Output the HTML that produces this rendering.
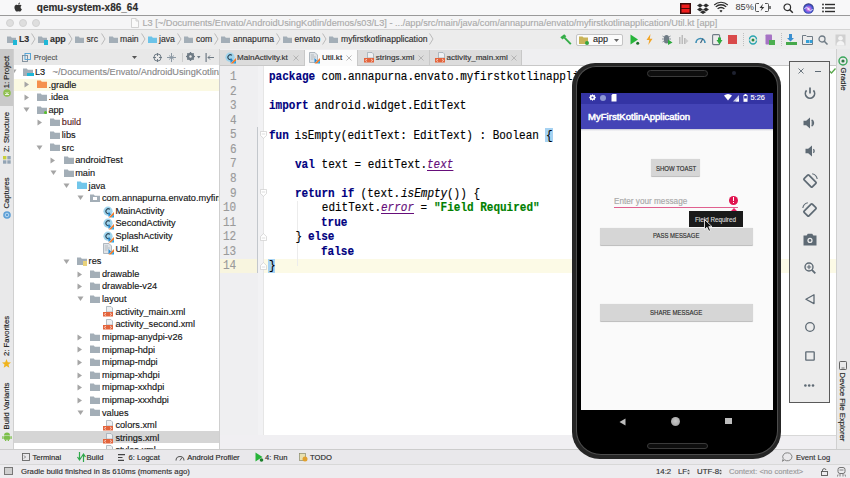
<!DOCTYPE html>
<html><head><meta charset="utf-8">
<style>
*{margin:0;padding:0;box-sizing:border-box}
html,body{width:850px;height:478px;overflow:hidden;background:#ececec;font-family:"Liberation Sans",sans-serif;position:relative}
.a{position:absolute}
.t{position:absolute;white-space:pre;line-height:1;-webkit-text-stroke:0.15px currentColor}
svg{overflow:visible}
</style></head><body>

<div class="a" style="left:0px;top:0px;width:850px;height:15px;background:#f8f8f9;"></div>
<div class="a" style="left:0px;top:15px;width:850px;height:1px;background:#9a9a9a;"></div>
<div class="a" style="left:0px;top:16px;width:850px;height:13px;background:#f5f5f6;"></div>
<div class="a" style="left:0px;top:29px;width:850px;height:1px;background:#d4d4d4;"></div>
<div class="a" style="left:0px;top:30px;width:850px;height:19px;background:#ececec;"></div>
<div class="a" style="left:0px;top:48.5px;width:850px;height:0.8px;background:#cfcfcf;"></div>
<div class="a" style="left:0px;top:49px;width:13px;height:400px;background:#e9e9ea;"></div>
<div class="a" style="left:0px;top:49px;width:13px;height:57px;background:#c9c9c9;"></div>
<div class="a" style="left:13px;top:49px;width:1px;height:400px;background:#d0d0d0;"></div>
<div class="a" style="left:14px;top:49px;width:205px;height:16px;background:#e8e8e8;"></div>
<div class="a" style="left:14px;top:65px;width:205px;height:384px;background:#ffffff;"></div>
<div class="a" style="left:219px;top:49px;width:1px;height:400px;background:#cfcfcf;"></div>
<div class="a" style="left:220px;top:49px;width:616px;height:17px;background:#efeff1;"></div>
<div class="a" style="left:220px;top:66px;width:616px;height:369px;background:#ffffff;"></div>
<div class="a" style="left:220px;top:66px;width:43px;height:369px;background:#efeff1;"></div>
<div class="a" style="left:263px;top:66px;width:1px;height:369px;background:#e6e6e6;"></div>
<div class="a" style="left:220px;top:435px;width:616px;height:14px;background:#f0eff2;"></div>
<div class="a" style="left:836px;top:49px;width:1px;height:400px;background:#d0d0d0;"></div>
<div class="a" style="left:837px;top:49px;width:13px;height:400px;background:#e9e9ea;"></div>
<div class="a" style="left:0px;top:449px;width:850px;height:1px;background:#cccccc;"></div>
<div class="a" style="left:0px;top:450px;width:850px;height:14px;background:#e9e8eb;"></div>
<div class="a" style="left:0px;top:464px;width:850px;height:1px;background:#d8d8d8;"></div>
<div class="a" style="left:0px;top:465px;width:850px;height:13px;background:#edecef;"></div>
<svg class="a" style="left:14.2px;top:1.8px" width="8.2" height="10" viewBox="0 0 16.5 20"><path d="M13.3 10.6c0-2.3 1.9-3.4 2-3.5-1.1-1.6-2.8-1.8-3.4-1.8-1.4-.1-2.8.9-3.5.9-.7 0-1.8-.8-3-.8C3.9 5.4 2.4 6.3 1.6 7.7 0 10.5 1.2 14.7 2.8 17c.8 1.1 1.7 2.4 2.9 2.3 1.2 0 1.6-.7 3-.7s1.8.7 3 .7c1.3 0 2.1-1.1 2.8-2.3.9-1.3 1.3-2.6 1.3-2.6s-2.5-1-2.5-3.8zM11 3.8c.6-.8 1.1-1.9 1-3-.9 0-2.1.6-2.7 1.4-.6.7-1.1 1.8-1 2.9 1 .1 2.1-.5 2.7-1.3z" fill="#333"/></svg>
<div class="t" style="left:36.80px;top:2.73px;font-size:10px;color:#2b2b2b;font-weight:bold;font-style:normal;font-family:'Liberation Sans',sans-serif;">qemu-system-x86_64</div>
<svg class="a" style="left:680px;top:2.5px;" width="11" height="11" viewBox="0 0 11 11"><rect x="0" y="0" width="11" height="11" fill="#3a0a0a"/><rect x="1.5" y="1.5" width="8" height="3.6" fill="#ee1c1c"/><rect x="1.5" y="6" width="8" height="3.6" fill="#ee1c1c"/></svg>
<svg class="a" style="left:697px;top:2.5px;" width="12" height="11" viewBox="0 0 12 11"><path d="M3 0.5L0 2.5 3 4.5 6 2.5z M9 0.5L6 2.5 9 4.5 12 2.5z M3 4.5L0 6.5 3 8.5 6 6.5z M9 4.5L6 6.5 9 8.5 12 6.5z M3 9.2L6 11 9 9.2 6 7.3z" fill="#2d2d2d"/></svg>
<svg class="a" style="left:714.5px;top:2.5px;" width="12" height="10" viewBox="0 0 12 10"><path d="M6 9.5 L4.5 7.7 A2.3 2.3 0 0 1 7.5 7.7Z" fill="#2d2d2d"/><path d="M2.6 5.9A4.8 4.8 0 0 1 9.4 5.9" stroke="#2d2d2d" stroke-width="1.3" fill="none"/><path d="M0.8 3.9A7.4 7.4 0 0 1 11.2 3.9" stroke="#2d2d2d" stroke-width="1.3" fill="none"/><path d="M-0.8 2A9.8 9.8 0 0 1 12.8 2" stroke="#2d2d2d" stroke-width="1.1" fill="none"/></svg>
<div class="t" style="left:735.50px;top:3.21px;font-size:9.2px;color:#3a3a3a;font-weight:normal;font-style:normal;font-family:'Liberation Sans',sans-serif;-webkit-text-stroke:0;">85%</div>
<svg class="a" style="left:755px;top:3px;" width="17" height="9" viewBox="0 0 17 9"><path d="M4 0.5H1.5A1 1 0 0 0 0.5 1.5V7.5A1 1 0 0 0 1.5 8.5H4M10 0.5H12.5A1 1 0 0 1 13.5 1.5V7.5A1 1 0 0 1 12.5 8.5H10" fill="none" stroke="#444" stroke-width="0.9"/><rect x="14.3" y="3" width="1.4" height="3" fill="#444"/><path d="M8 0.8L4.5 5 6.8 5 5.6 8.3 9.3 3.9 7 3.9z" fill="#333"/></svg>
<svg class="a" style="left:783px;top:2.5px;" width="11" height="11" viewBox="0 0 11 11"><circle cx="4.3" cy="4.3" r="3.3" fill="none" stroke="#2d2d2d" stroke-width="1.2"/><path d="M6.8 6.8L9.8 9.8" stroke="#2d2d2d" stroke-width="1.5"/></svg>
<svg class="a" style="left:803px;top:2.5px;" width="11" height="11" viewBox="0 0 11 11"><defs><radialGradient id="siri" cx="50%" cy="55%" r="60%"><stop offset="0" stop-color="#ffffff"/><stop offset="0.25" stop-color="#c86ee6"/><stop offset="0.6" stop-color="#4a5ad8"/><stop offset="1" stop-color="#20204a"/></radialGradient></defs><circle cx="5.5" cy="5.5" r="5.3" fill="url(#siri)"/><path d="M1.5 6Q3.5 2.5 5.5 6T9.5 6" stroke="#e8f6ff" stroke-width="0.9" fill="none"/></svg>
<svg class="a" style="left:822px;top:3px;" width="13" height="10" viewBox="0 0 13 10"><circle cx="1" cy="1.5" r="0.9" fill="#2d2d2d"/><circle cx="1" cy="5" r="0.9" fill="#2d2d2d"/><circle cx="1" cy="8.5" r="0.9" fill="#2d2d2d"/><rect x="3" y="0.8" width="10" height="1.4" fill="#2d2d2d"/><rect x="3" y="4.3" width="10" height="1.4" fill="#2d2d2d"/><rect x="3" y="7.8" width="10" height="1.4" fill="#2d2d2d"/></svg>
<div class="a" style="left:5.5px;top:18.7px;width:8px;height:8px;border-radius:50%;background:#dedede;border:0.6px solid #d2d2d2"></div>
<div class="a" style="left:18.7px;top:18.7px;width:8px;height:8px;border-radius:50%;background:#dedede;border:0.6px solid #d2d2d2"></div>
<div class="a" style="left:31.9px;top:18.7px;width:8px;height:8px;border-radius:50%;background:#dedede;border:0.6px solid #d2d2d2"></div>
<svg class="a" style="left:130.8px;top:18px;" width="8" height="10" viewBox="0 0 8 10"><path d="M0.5 0.5H5L7.5 3V9.5H0.5Z" fill="#fafafa" stroke="#c8c8c8" stroke-width="0.8"/><path d="M5 0.5V3H7.5" fill="none" stroke="#c8c8c8" stroke-width="0.8"/></svg>
<div class="t" style="left:142.50px;top:19.31px;font-size:9.2px;color:#ababab;font-weight:normal;font-style:normal;font-family:'Liberation Sans',sans-serif;">L3 [~/Documents/Envato/AndroidUsingKotlin/demos/s03/L3] - .../app/src/main/java/com/annapurna/envato/myfirstkotlinapplication/Util.kt [app]</div>
<svg class="a" style="left:7px;top:35.5px;" width="9" height="7" viewBox="0 0 9 7"><path d="M0 0.5H3.8L4.8 1.8H9V7H0Z" fill="#a3aeb7"/></svg>
<div class="a" style="left:12.5px;top:40px;width:4.5px;height:4.5px;background:#20b7d6;"></div>
<div class="t" style="left:19.00px;top:34.85px;font-size:8.8px;color:#303030;font-weight:bold;font-style:normal;font-family:'Liberation Sans',sans-serif;">L3</div>
<svg class="a" style="left:30.8px;top:33px;" width="5" height="12" viewBox="0 0 5 12"><path d="M0.6 0.5L4 6 0.6 11.5" fill="none" stroke="#b4b4b4" stroke-width="0.9"/></svg>
<svg class="a" style="left:38px;top:35.5px;" width="9" height="7" viewBox="0 0 9 7"><path d="M0 0.5H3.8L4.8 1.8H9V7H0Z" fill="#a3aeb7"/></svg>
<div class="a" style="left:43.5px;top:40px;width:4.5px;height:4.5px;background:#20b7d6;"></div>
<div class="t" style="left:50.00px;top:34.85px;font-size:8.8px;color:#303030;font-weight:bold;font-style:normal;font-family:'Liberation Sans',sans-serif;">app</div>
<svg class="a" style="left:68px;top:33px;" width="5" height="12" viewBox="0 0 5 12"><path d="M0.6 0.5L4 6 0.6 11.5" fill="none" stroke="#b4b4b4" stroke-width="0.9"/></svg>
<svg class="a" style="left:75px;top:35.5px;" width="9" height="7" viewBox="0 0 9 7"><path d="M0 0.5H3.8L4.8 1.8H9V7H0Z" fill="#a3aeb7"/></svg>
<div class="t" style="left:86.50px;top:35.02px;font-size:8.6px;color:#303030;font-weight:normal;font-style:normal;font-family:'Liberation Sans',sans-serif;">src</div>
<svg class="a" style="left:101.1px;top:33px;" width="5" height="12" viewBox="0 0 5 12"><path d="M0.6 0.5L4 6 0.6 11.5" fill="none" stroke="#b4b4b4" stroke-width="0.9"/></svg>
<svg class="a" style="left:108.5px;top:35.5px;" width="9" height="7" viewBox="0 0 9 7"><path d="M0 0.5H3.8L4.8 1.8H9V7H0Z" fill="#a3aeb7"/></svg>
<div class="t" style="left:120.00px;top:35.02px;font-size:8.6px;color:#303030;font-weight:normal;font-style:normal;font-family:'Liberation Sans',sans-serif;">main</div>
<svg class="a" style="left:141px;top:33px;" width="5" height="12" viewBox="0 0 5 12"><path d="M0.6 0.5L4 6 0.6 11.5" fill="none" stroke="#b4b4b4" stroke-width="0.9"/></svg>
<svg class="a" style="left:147.5px;top:35.5px;" width="9" height="7" viewBox="0 0 9 7"><path d="M0 0.5H3.8L4.8 1.8H9V7H0Z" fill="#6cc3e8"/></svg>
<div class="t" style="left:159.00px;top:35.02px;font-size:8.6px;color:#303030;font-weight:normal;font-style:normal;font-family:'Liberation Sans',sans-serif;">java</div>
<svg class="a" style="left:177px;top:33px;" width="5" height="12" viewBox="0 0 5 12"><path d="M0.6 0.5L4 6 0.6 11.5" fill="none" stroke="#b4b4b4" stroke-width="0.9"/></svg>
<svg class="a" style="left:184px;top:35.5px;" width="9" height="7" viewBox="0 0 9 7"><path d="M0 0.5H3.8L4.8 1.8H9V7H0Z" fill="#a3aeb7"/></svg>
<div class="t" style="left:196.00px;top:35.02px;font-size:8.6px;color:#303030;font-weight:normal;font-style:normal;font-family:'Liberation Sans',sans-serif;">com</div>
<svg class="a" style="left:214px;top:33px;" width="5" height="12" viewBox="0 0 5 12"><path d="M0.6 0.5L4 6 0.6 11.5" fill="none" stroke="#b4b4b4" stroke-width="0.9"/></svg>
<svg class="a" style="left:221px;top:35.5px;" width="9" height="7" viewBox="0 0 9 7"><path d="M0 0.5H3.8L4.8 1.8H9V7H0Z" fill="#a3aeb7"/></svg>
<div class="t" style="left:233.00px;top:35.02px;font-size:8.6px;color:#303030;font-weight:normal;font-style:normal;font-family:'Liberation Sans',sans-serif;">annapurna</div>
<svg class="a" style="left:276px;top:33px;" width="5" height="12" viewBox="0 0 5 12"><path d="M0.6 0.5L4 6 0.6 11.5" fill="none" stroke="#b4b4b4" stroke-width="0.9"/></svg>
<svg class="a" style="left:283px;top:35.5px;" width="9" height="7" viewBox="0 0 9 7"><path d="M0 0.5H3.8L4.8 1.8H9V7H0Z" fill="#a3aeb7"/></svg>
<div class="t" style="left:294.50px;top:35.02px;font-size:8.6px;color:#303030;font-weight:normal;font-style:normal;font-family:'Liberation Sans',sans-serif;">envato</div>
<svg class="a" style="left:322.0px;top:33px;" width="5" height="12" viewBox="0 0 5 12"><path d="M0.6 0.5L4 6 0.6 11.5" fill="none" stroke="#b4b4b4" stroke-width="0.9"/></svg>
<svg class="a" style="left:329px;top:35.5px;" width="9" height="7" viewBox="0 0 9 7"><path d="M0 0.5H3.8L4.8 1.8H9V7H0Z" fill="#a3aeb7"/></svg>
<div class="t" style="left:341.00px;top:35.02px;font-size:8.6px;color:#303030;font-weight:normal;font-style:normal;font-family:'Liberation Sans',sans-serif;">myfirstkotlinapplication</div>
<svg class="a" style="left:429px;top:33px;" width="5" height="12" viewBox="0 0 5 12"><path d="M0.6 0.5L4 6 0.6 11.5" fill="none" stroke="#b4b4b4" stroke-width="0.9"/></svg>
<svg class="a" style="left:560px;top:34px;" width="12" height="11" viewBox="0 0 12 11"><path d="M0.3 3.2L4.2 0.2 6.3 2.3 2.5 5.5z" fill="#35ad48"/><path d="M4.2 3.3L10.8 10.2" stroke="#35ad48" stroke-width="1.9"/></svg>
<div class="a" style="left:576px;top:34px;width:47px;height:12px;background:#fbfbfb;border:0.8px solid #c4c4c4;border-radius:2px"></div>
<svg class="a" style="left:579px;top:36px;" width="11" height="9" viewBox="0 0 11 9"><path d="M0 0.5H3.5L4.5 1.5H9V8H0Z" fill="#c9b458"/><circle cx="8" cy="7" r="2" fill="#37a33e"/></svg>
<div class="t" style="left:593.00px;top:35.38px;font-size:9px;color:#2a2a2a;font-weight:normal;font-style:normal;font-family:'Liberation Sans',sans-serif;">app</div>
<svg class="a" style="left:614px;top:38.5px;" width="6" height="4" viewBox="0 0 6 4"><path d="M0 0H5L2.5 3z" fill="#666"/></svg>
<svg class="a" style="left:629.5px;top:34px;" width="10" height="12" viewBox="0 0 10 12"><path d="M0.5 0.5L8 5.5 0.5 10.5z" fill="#27b43a"/><circle cx="7.7" cy="9.3" r="1.5" fill="#1b6e28"/></svg>
<svg class="a" style="left:646px;top:34px;" width="7" height="11" viewBox="0 0 7 11"><path d="M4.5 0L0.5 6H3.3L2.3 11 6.5 4.7H3.8z" fill="#f2a526"/></svg>
<svg class="a" style="left:662px;top:34px;" width="11" height="11" viewBox="0 0 11 11"><path d="M2 3.5Q2 1 4.5 1 7 1 7 3.5V7Q7 9.5 4.5 9.5 2 9.5 2 7z" fill="#6f7b85"/><path d="M0 5H2M7 5H9M0.5 8L2 7M8.5 8L7 7M0.5 2L2 3M8.5 2L7 3" stroke="#6f7b85" stroke-width="0.8"/><path d="M6 5.5L10.5 8.5 6 11z" fill="#2eaa3e"/></svg>
<svg class="a" style="left:678px;top:34px;" width="11" height="11" viewBox="0 0 11 11"><rect x="1" y="3" width="1.5" height="7" fill="#bbb"/><rect x="3.5" y="1" width="1.5" height="9" fill="#bbb"/><rect x="6" y="4" width="1.5" height="6" fill="#bbb"/><path d="M7 4L10.5 7 7 10z" fill="#ccc"/></svg>
<svg class="a" style="left:694.5px;top:35px;" width="11" height="9" viewBox="0 0 11 9"><path d="M1 8A4.5 4.5 0 0 1 10 8" fill="none" stroke="#3e8fb5" stroke-width="1.6"/><path d="M5.5 8L8 3.5" stroke="#3e5f78" stroke-width="1.2"/></svg>
<svg class="a" style="left:712px;top:34px;" width="11" height="11" viewBox="0 0 11 11"><rect x="0.6" y="0.6" width="7" height="10" rx="1" fill="none" stroke="#6f7b85" stroke-width="1.1"/><path d="M4.5 6H10.5L7.5 10.5z" fill="#2eaa3e"/><rect x="6" y="3.5" width="3" height="3" fill="#2eaa3e"/></svg>
<div class="a" style="left:728px;top:35px;width:9px;height:9px;background:#d94a4a;"></div>
<svg class="a" style="left:743px;top:33px;" width="1" height="13" viewBox="0 0 1 13"><path d="M0.5 0V13" stroke="#b5b5b5" stroke-width="0.8" stroke-dasharray="1 1"/></svg>
<svg class="a" style="left:748px;top:34px;" width="10" height="11" viewBox="0 0 10 11"><path d="M1.5 5.5A3.5 3.5 0 0 1 8.5 5.5" fill="none" stroke="#2aa5b0" stroke-width="1.4"/><path d="M1.5 6.5A3.5 3.5 0 0 0 8.5 6.5" fill="none" stroke="#2aa5b0" stroke-width="1.4"/><circle cx="5" cy="6" r="1.5" fill="#2e8a3e"/></svg>
<svg class="a" style="left:764.5px;top:34px;" width="10" height="11" viewBox="0 0 10 11"><rect x="0.5" y="0.5" width="6.5" height="10" rx="0.8" fill="#a673c4"/><rect x="4" y="6" width="6" height="5" fill="#4caf50"/></svg>
<svg class="a" style="left:781px;top:33px;" width="1" height="13" viewBox="0 0 1 13"><path d="M0.5 0V13" stroke="#b5b5b5" stroke-width="0.8" stroke-dasharray="1 1"/></svg>
<svg class="a" style="left:786px;top:34px;" width="11" height="11" viewBox="0 0 11 11"><path d="M3 0H6V4H8L4.5 7.5 1 4H3z" fill="#3a8fd0"/><rect x="0" y="8" width="11" height="3" fill="#45a84a"/></svg>
<svg class="a" style="left:801.5px;top:34.5px;" width="11" height="10" viewBox="0 0 11 10"><path d="M0.5 0.5H4L5 1.5H10.5V9.5H0.5Z" fill="none" stroke="#6f7b85" stroke-width="1"/><rect x="4" y="5" width="3" height="3" fill="#35a0d8"/><rect x="7.5" y="5" width="3" height="3" fill="#35a0d8"/></svg>
<svg class="a" style="left:818px;top:34.5px;" width="10" height="10" viewBox="0 0 10 10"><circle cx="4" cy="4" r="3" fill="none" stroke="#6f7b85" stroke-width="1.3"/><path d="M6.3 6.3L9.5 9.5" stroke="#6f7b85" stroke-width="1.6"/></svg>
<svg class="a" style="left:834.5px;top:33.5px;" width="11" height="12" viewBox="0 0 11 12"><rect x="0.5" y="0.5" width="10" height="11" fill="#d0d0d0"/><circle cx="5.5" cy="4.3" r="2.3" fill="#f4f4f4"/><path d="M1.5 11.5Q1.5 7 5.5 7 9.5 7 9.5 11.5z" fill="#f4f4f4"/></svg>
<div class="t" style="left:6.9px;top:72.0px;font-size:7.7px;color:#1a1a1a;font-weight:normal;transform:translate(-50%,-50%) rotate(-90deg);transform-origin:center;line-height:1">1: Project</div>
<svg class="a" style="left:2.5px;top:89.3px;" width="8" height="8" viewBox="0 0 8 8"><circle cx="4" cy="4" r="3.8" fill="#8fc04f"/><path d="M2 5.5H6M2.5 3L5.5 6M5.5 3L2.5 6" stroke="#fff" stroke-width="0.7"/></svg>
<div class="t" style="left:6.9px;top:132.2px;font-size:7.7px;color:#1a1a1a;font-weight:normal;transform:translate(-50%,-50%) rotate(-90deg);transform-origin:center;line-height:1">Z: Structure</div>
<svg class="a" style="left:3px;top:155.5px;" width="8" height="8" viewBox="0 0 8 8"><rect x="0" y="0" width="3.4" height="3.4" fill="#c9cf3a"/><rect x="4.3" y="0" width="3.4" height="3.4" fill="#93a4b4"/><rect x="0" y="4.3" width="3.4" height="3.4" fill="#93a4b4"/><rect x="4.3" y="4.3" width="3.4" height="3.4" fill="#93a4b4"/></svg>
<div class="t" style="left:6.9px;top:192.6px;font-size:7.7px;color:#1a1a1a;font-weight:normal;transform:translate(-50%,-50%) rotate(-90deg);transform-origin:center;line-height:1">Captures</div>
<svg class="a" style="left:2.5px;top:211px;" width="8" height="8" viewBox="0 0 8 8"><circle cx="4" cy="4" r="3.8" fill="#5d9fd6"/><circle cx="4" cy="4" r="1.8" fill="none" stroke="#cfe6f7" stroke-width="0.8"/></svg>
<div class="t" style="left:6.9px;top:336px;font-size:7.7px;color:#1a1a1a;font-weight:normal;transform:translate(-50%,-50%) rotate(-90deg);transform-origin:center;line-height:1">2: Favorites</div>
<svg class="a" style="left:2px;top:359px;" width="9" height="9" viewBox="0 0 9 9"><path d="M4.5 0L5.8 3.2 9 3.4 6.5 5.5 7.3 8.8 4.5 7 1.7 8.8 2.5 5.5 0 3.4 3.2 3.2z" fill="#f0b41e"/></svg>
<div class="t" style="left:6.9px;top:405.5px;font-size:7.7px;color:#1a1a1a;font-weight:normal;transform:translate(-50%,-50%) rotate(-90deg);transform-origin:center;line-height:1">Build Variants</div>
<svg class="a" style="left:1.5px;top:432px;" width="10" height="9" viewBox="0 0 10 9"><path d="M2 3.6A3 3 0 0 1 8 3.6z" fill="#7cc04a"/><rect x="2" y="4.1" width="6" height="3.6" rx="0.6" fill="#7cc04a"/><rect x="0.3" y="4.1" width="1.3" height="3" rx="0.6" fill="#7cc04a"/><rect x="8.4" y="4.1" width="1.3" height="3" rx="0.6" fill="#7cc04a"/><rect x="3" y="7.5" width="1.3" height="1.5" fill="#7cc04a"/><rect x="5.7" y="7.5" width="1.3" height="1.5" fill="#7cc04a"/></svg>
<svg class="a" style="left:21.5px;top:52.5px;" width="9" height="9" viewBox="0 0 9 9"><rect x="0.5" y="2.5" width="5" height="6" fill="none" stroke="#7a8a98" stroke-width="0.9"/><rect x="3" y="0.5" width="5.5" height="6" fill="none" stroke="#4a9fd5" stroke-width="0.9"/></svg>
<div class="t" style="left:33.80px;top:53.87px;font-size:7.6px;color:#555555;font-weight:normal;font-style:normal;font-family:'Liberation Sans',sans-serif;">Project</div>
<svg class="a" style="left:131.5px;top:55.5px;" width="6" height="4" viewBox="0 0 6 4"><path d="M0 0H5L2.5 3z" fill="#555"/></svg>
<svg class="a" style="left:153px;top:52.5px;" width="9" height="9" viewBox="0 0 9 9"><circle cx="4.5" cy="4.5" r="3.6" fill="none" stroke="#6f7b85" stroke-width="1"/><path d="M4.5 0V3M4.5 6V9M0 4.5H3M6 4.5H9" stroke="#6f7b85" stroke-width="1"/></svg>
<svg class="a" style="left:167px;top:52.5px;" width="9" height="9" viewBox="0 0 9 9"><path d="M4.5 0V9M0 4.5H9" stroke="#8c99a4" stroke-width="1"/><path d="M2 2.5L4.5 4.5 2 6.5M7 2.5L4.5 4.5 7 6.5" fill="none" stroke="#8c99a4" stroke-width="0.9"/></svg>
<div class="a" style="left:181.5px;top:52.5px;width:0.8px;height:9px;background:#cccccc;"></div>
<svg class="a" style="left:186px;top:52px;" width="10" height="10" viewBox="0 0 10 10"><circle cx="4.5" cy="4.5" r="2.8" fill="none" stroke="#6f7b85" stroke-width="2"/><path d="M4.5 0V9M0 4.5H9M1.3 1.3L7.7 7.7M7.7 1.3L1.3 7.7" stroke="#6f7b85" stroke-width="1.2"/><circle cx="4.5" cy="4.5" r="1.2" fill="#e8e8e8"/></svg>
<svg class="a" style="left:196.5px;top:56px;" width="4" height="3" viewBox="0 0 4 3"><path d="M0 0H3.5L1.75 2.5z" fill="#6f7b85"/></svg>
<svg class="a" style="left:205px;top:52.5px;" width="9" height="9" viewBox="0 0 9 9"><rect x="0.5" y="0" width="1.2" height="9" fill="#6f7b85"/><path d="M3 4.5H9" stroke="#6f7b85" stroke-width="1"/><path d="M5 2.5L3 4.5 5 6.5" fill="none" stroke="#6f7b85" stroke-width="1"/></svg>
<div class="a" style="left:14px;top:78.8px;width:205px;height:11.8px;background:#fbf9e2;"></div>
<div class="a" style="left:14px;top:431.2px;width:205px;height:12.1px;background:#d5d5d5;"></div>
<div class="a" style="left:14px;top:65px;width:205px;height:384px;overflow:hidden">
<svg class="a" style="left:-4.399999999999999px;top:4.299999999999997px;" width="7" height="6" viewBox="0 0 7 6"><path d="M0.5 0.5H6.5L3.5 5z" fill="#a5a5a5"/></svg>
<svg class="a" style="left:9.3px;top:2.799999999999997px;" width="10" height="8" viewBox="0 0 10 8"><path d="M0 0.5H3.8L4.8 1.8H10V8H0Z" fill="#a3aeb7"/></svg>
<div class="a" style="left:13.3px;top:8.299999999999997px;width:6.5px;height:3px;background:#20b7d6;"></div>
<div class="t" style="left:21.00px;top:3.01px;font-size:9.2px;color:#161616;font-weight:normal;font-style:normal;font-family:'Liberation Sans',sans-serif;">L3</div>
<div class="t" style="left:38.60px;top:3.01px;font-size:9.2px;color:#888;font-weight:normal;font-style:normal;font-family:'Liberation Sans',sans-serif;">~/Documents/Envato/AndroidUsingKotlin/demos/s03/L3</div>
<svg class="a" style="left:9.5px;top:16.414999999999992px;" width="6" height="7" viewBox="0 0 6 7"><path d="M0.5 0.5L5 3.5 0.5 6.5z" fill="#a5a5a5"/></svg>
<svg class="a" style="left:22.700000000000003px;top:15.414999999999992px;" width="10" height="8" viewBox="0 0 10 8"><path d="M0 0.5H3.8L4.8 1.8H10V8H0Z" fill="#f5914e"/></svg>
<div class="t" style="left:34.40px;top:15.63px;font-size:9.2px;color:#161616;font-weight:normal;font-style:normal;font-family:'Liberation Sans',sans-serif;">.gradle</div>
<svg class="a" style="left:9.5px;top:29.03px;" width="6" height="7" viewBox="0 0 6 7"><path d="M0.5 0.5L5 3.5 0.5 6.5z" fill="#a5a5a5"/></svg>
<svg class="a" style="left:22.700000000000003px;top:28.03px;" width="10" height="8" viewBox="0 0 10 8"><path d="M0 0.5H3.8L4.8 1.8H10V8H0Z" fill="#a3aeb7"/></svg>
<div class="t" style="left:34.40px;top:28.24px;font-size:9.2px;color:#161616;font-weight:normal;font-style:normal;font-family:'Liberation Sans',sans-serif;">.idea</div>
<svg class="a" style="left:9.0px;top:42.144999999999996px;" width="7" height="6" viewBox="0 0 7 6"><path d="M0.5 0.5H6.5L3.5 5z" fill="#a5a5a5"/></svg>
<svg class="a" style="left:22.700000000000003px;top:40.644999999999996px;" width="10" height="8" viewBox="0 0 10 8"><path d="M0 0.5H3.8L4.8 1.8H10V8H0Z" fill="#a3aeb7"/></svg>
<div class="a" style="left:29.700000000000003px;top:46.144999999999996px;width:3px;height:3px;border-radius:50%;background:#58c02a"></div>
<div class="t" style="left:34.40px;top:40.86px;font-size:9.2px;color:#161616;font-weight:normal;font-style:normal;font-family:'Liberation Sans',sans-serif;">app</div>
<svg class="a" style="left:22.90000000000001px;top:54.25999999999999px;" width="6" height="7" viewBox="0 0 6 7"><path d="M0.5 0.5L5 3.5 0.5 6.5z" fill="#a5a5a5"/></svg>
<svg class="a" style="left:36.10000000000001px;top:53.25999999999999px;" width="10" height="8" viewBox="0 0 10 8"><path d="M0 0.5H3.8L4.8 1.8H10V8H0Z" fill="#a3aeb7"/></svg>
<div class="t" style="left:47.80px;top:53.47px;font-size:9.2px;color:#5a1f1f;font-weight:normal;font-style:normal;font-family:'Liberation Sans',sans-serif;">build</div>
<svg class="a" style="left:36.10000000000001px;top:65.875px;" width="10" height="8" viewBox="0 0 10 8"><path d="M0 0.5H3.8L4.8 1.8H10V8H0Z" fill="#a3aeb7"/></svg>
<div class="t" style="left:47.80px;top:66.09px;font-size:9.2px;color:#161616;font-weight:normal;font-style:normal;font-family:'Liberation Sans',sans-serif;">libs</div>
<svg class="a" style="left:22.40000000000001px;top:79.99000000000001px;" width="7" height="6" viewBox="0 0 7 6"><path d="M0.5 0.5H6.5L3.5 5z" fill="#a5a5a5"/></svg>
<svg class="a" style="left:36.10000000000001px;top:78.49000000000001px;" width="10" height="8" viewBox="0 0 10 8"><path d="M0 0.5H3.8L4.8 1.8H10V8H0Z" fill="#a3aeb7"/></svg>
<div class="t" style="left:47.80px;top:78.70px;font-size:9.2px;color:#161616;font-weight:normal;font-style:normal;font-family:'Liberation Sans',sans-serif;">src</div>
<svg class="a" style="left:36.30000000000001px;top:92.10500000000002px;" width="6" height="7" viewBox="0 0 6 7"><path d="M0.5 0.5L5 3.5 0.5 6.5z" fill="#a5a5a5"/></svg>
<svg class="a" style="left:49.500000000000014px;top:91.10500000000002px;" width="10" height="8" viewBox="0 0 10 8"><path d="M0 0.5H3.8L4.8 1.8H10V8H0Z" fill="#a3aeb7"/></svg>
<div class="t" style="left:61.20px;top:91.32px;font-size:9.2px;color:#161616;font-weight:normal;font-style:normal;font-family:'Liberation Sans',sans-serif;">androidTest</div>
<svg class="a" style="left:35.80000000000001px;top:105.22px;" width="7" height="6" viewBox="0 0 7 6"><path d="M0.5 0.5H6.5L3.5 5z" fill="#a5a5a5"/></svg>
<svg class="a" style="left:49.500000000000014px;top:103.72px;" width="10" height="8" viewBox="0 0 10 8"><path d="M0 0.5H3.8L4.8 1.8H10V8H0Z" fill="#a3aeb7"/></svg>
<div class="t" style="left:61.20px;top:103.93px;font-size:9.2px;color:#161616;font-weight:normal;font-style:normal;font-family:'Liberation Sans',sans-serif;">main</div>
<svg class="a" style="left:49.2px;top:117.83499999999998px;" width="7" height="6" viewBox="0 0 7 6"><path d="M0.5 0.5H6.5L3.5 5z" fill="#a5a5a5"/></svg>
<svg class="a" style="left:62.900000000000006px;top:116.33499999999998px;" width="10" height="8" viewBox="0 0 10 8"><path d="M0 0.5H3.8L4.8 1.8H10V8H0Z" fill="#72c6ea"/></svg>
<div class="t" style="left:74.60px;top:116.55px;font-size:9.2px;color:#161616;font-weight:normal;font-style:normal;font-family:'Liberation Sans',sans-serif;">java</div>
<svg class="a" style="left:62.599999999999994px;top:130.45px;" width="7" height="6" viewBox="0 0 7 6"><path d="M0.5 0.5H6.5L3.5 5z" fill="#a5a5a5"/></svg>
<svg class="a" style="left:76.3px;top:128.95px;" width="10" height="8" viewBox="0 0 10 8"><path d="M0 0.5H3.8L4.8 1.8H10V8H0Z" fill="#a3aeb7"/></svg>
<div class="a" style="left:79.3px;top:131.95px;width:4px;height:3px;background:#ffffff;"></div>
<div class="t" style="left:88.00px;top:129.16px;font-size:9.2px;color:#161616;font-weight:normal;font-style:normal;font-family:'Liberation Sans',sans-serif;">com.annapurna.envato.myfirstkotlinapplication</div>
<svg class="a" style="left:88.7px;top:140.565px;" width="12" height="12" viewBox="0 0 12 12"><circle cx="5" cy="5.2" r="4.6" fill="#9fd4ec"/><path d="M6.9 3.4A2.4 2.4 0 1 0 6.9 7" fill="none" stroke="#2f4a5c" stroke-width="1.1"/><path d="M5.5 11.5L11 6V8.6L8.1 11.5z" fill="#f0792a"/><path d="M8.1 11.5L11 8.6V11.5z" fill="#22a4e6"/><path d="M5.5 6L8 8.5 5.5 11z" fill="#1f8ad8"/></svg>
<div class="t" style="left:101.40px;top:141.78px;font-size:9.2px;color:#161616;font-weight:normal;font-style:normal;font-family:'Liberation Sans',sans-serif;">MainActivity</div>
<svg class="a" style="left:88.7px;top:153.18px;" width="12" height="12" viewBox="0 0 12 12"><circle cx="5" cy="5.2" r="4.6" fill="#9fd4ec"/><path d="M6.9 3.4A2.4 2.4 0 1 0 6.9 7" fill="none" stroke="#2f4a5c" stroke-width="1.1"/><path d="M5.5 11.5L11 6V8.6L8.1 11.5z" fill="#f0792a"/><path d="M8.1 11.5L11 8.6V11.5z" fill="#22a4e6"/><path d="M5.5 6L8 8.5 5.5 11z" fill="#1f8ad8"/></svg>
<div class="t" style="left:101.40px;top:154.39px;font-size:9.2px;color:#161616;font-weight:normal;font-style:normal;font-family:'Liberation Sans',sans-serif;">SecondActivity</div>
<svg class="a" style="left:88.7px;top:165.79500000000002px;" width="12" height="12" viewBox="0 0 12 12"><circle cx="5" cy="5.2" r="4.6" fill="#9fd4ec"/><path d="M6.9 3.4A2.4 2.4 0 1 0 6.9 7" fill="none" stroke="#2f4a5c" stroke-width="1.1"/><path d="M5.5 11.5L11 6V8.6L8.1 11.5z" fill="#f0792a"/><path d="M8.1 11.5L11 8.6V11.5z" fill="#22a4e6"/><path d="M5.5 6L8 8.5 5.5 11z" fill="#1f8ad8"/></svg>
<div class="t" style="left:101.40px;top:167.01px;font-size:9.2px;color:#161616;font-weight:normal;font-style:normal;font-family:'Liberation Sans',sans-serif;">SplashActivity</div>
<svg class="a" style="left:88.7px;top:178.41000000000003px;" width="12" height="12" viewBox="0 0 12 12"><path d="M0.5 0.5H6L8.5 3V10.5H0.5Z" fill="#dfe3e7" stroke="#a0aab2" stroke-width="0.8"/><path d="M1.8 3H5M1.8 5H6.8M1.8 7H4.5" stroke="#a0aab2" stroke-width="0.7"/><path d="M5.5 11.5L11 6V8.6L8.1 11.5z" fill="#f0792a"/><path d="M8.1 11.5L11 8.6V11.5z" fill="#22a4e6"/><path d="M5.5 6L8 8.5 5.5 11z" fill="#1f8ad8"/></svg>
<div class="t" style="left:101.40px;top:179.62px;font-size:9.2px;color:#161616;font-weight:normal;font-style:normal;font-family:'Liberation Sans',sans-serif;">Util.kt</div>
<svg class="a" style="left:49.2px;top:193.52499999999998px;" width="7" height="6" viewBox="0 0 7 6"><path d="M0.5 0.5H6.5L3.5 5z" fill="#a5a5a5"/></svg>
<svg class="a" style="left:62.900000000000006px;top:192.02499999999998px;" width="10" height="8" viewBox="0 0 10 8"><path d="M0 0.5H3.8L4.8 1.8H10V8H0Z" fill="#a3aeb7"/></svg>
<div class="a" style="left:68.9px;top:195.52499999999998px;width:4px;height:5px;background:#e9d27a;"></div>
<div class="t" style="left:74.60px;top:192.24px;font-size:9.2px;color:#161616;font-weight:normal;font-style:normal;font-family:'Liberation Sans',sans-serif;">res</div>
<svg class="a" style="left:63.099999999999994px;top:205.64px;" width="6" height="7" viewBox="0 0 6 7"><path d="M0.5 0.5L5 3.5 0.5 6.5z" fill="#a5a5a5"/></svg>
<svg class="a" style="left:76.3px;top:204.64px;" width="10" height="8" viewBox="0 0 10 8"><path d="M0 0.5H3.8L4.8 1.8H10V8H0Z" fill="#a3aeb7"/></svg>
<div class="t" style="left:88.00px;top:204.85px;font-size:9.2px;color:#161616;font-weight:normal;font-style:normal;font-family:'Liberation Sans',sans-serif;">drawable</div>
<svg class="a" style="left:63.099999999999994px;top:218.255px;" width="6" height="7" viewBox="0 0 6 7"><path d="M0.5 0.5L5 3.5 0.5 6.5z" fill="#a5a5a5"/></svg>
<svg class="a" style="left:76.3px;top:217.255px;" width="10" height="8" viewBox="0 0 10 8"><path d="M0 0.5H3.8L4.8 1.8H10V8H0Z" fill="#a3aeb7"/></svg>
<div class="t" style="left:88.00px;top:217.47px;font-size:9.2px;color:#161616;font-weight:normal;font-style:normal;font-family:'Liberation Sans',sans-serif;">drawable-v24</div>
<svg class="a" style="left:62.599999999999994px;top:231.37px;" width="7" height="6" viewBox="0 0 7 6"><path d="M0.5 0.5H6.5L3.5 5z" fill="#a5a5a5"/></svg>
<svg class="a" style="left:76.3px;top:229.87px;" width="10" height="8" viewBox="0 0 10 8"><path d="M0 0.5H3.8L4.8 1.8H10V8H0Z" fill="#a3aeb7"/></svg>
<div class="t" style="left:88.00px;top:230.08px;font-size:9.2px;color:#161616;font-weight:normal;font-style:normal;font-family:'Liberation Sans',sans-serif;">layout</div>
<svg class="a" style="left:88.7px;top:241.485px;" width="11" height="11" viewBox="0 0 11 11"><path d="M3.5 0.5H8L9.5 2V6H3.5Z" fill="#eef0f2" stroke="#9aa5ad" stroke-width="0.7"/><rect x="0" y="6" width="10" height="4.5" fill="#e3643c"/><path d="M2.8 7L1.5 8.3 2.8 9.5M7.2 7L8.5 8.3 7.2 9.5" fill="none" stroke="#fff" stroke-width="0.8"/></svg>
<div class="t" style="left:101.40px;top:242.70px;font-size:9.2px;color:#161616;font-weight:normal;font-style:normal;font-family:'Liberation Sans',sans-serif;">activity_main.xml</div>
<svg class="a" style="left:88.7px;top:254.10000000000002px;" width="11" height="11" viewBox="0 0 11 11"><path d="M3.5 0.5H8L9.5 2V6H3.5Z" fill="#eef0f2" stroke="#9aa5ad" stroke-width="0.7"/><rect x="0" y="6" width="10" height="4.5" fill="#e3643c"/><path d="M2.8 7L1.5 8.3 2.8 9.5M7.2 7L8.5 8.3 7.2 9.5" fill="none" stroke="#fff" stroke-width="0.8"/></svg>
<div class="t" style="left:101.40px;top:255.31px;font-size:9.2px;color:#161616;font-weight:normal;font-style:normal;font-family:'Liberation Sans',sans-serif;">activity_second.xml</div>
<svg class="a" style="left:63.099999999999994px;top:268.71500000000003px;" width="6" height="7" viewBox="0 0 6 7"><path d="M0.5 0.5L5 3.5 0.5 6.5z" fill="#a5a5a5"/></svg>
<svg class="a" style="left:76.3px;top:267.71500000000003px;" width="10" height="8" viewBox="0 0 10 8"><path d="M0 0.5H3.8L4.8 1.8H10V8H0Z" fill="#a3aeb7"/></svg>
<div class="t" style="left:88.00px;top:267.93px;font-size:9.2px;color:#161616;font-weight:normal;font-style:normal;font-family:'Liberation Sans',sans-serif;">mipmap-anydpi-v26</div>
<svg class="a" style="left:63.099999999999994px;top:281.33000000000004px;" width="6" height="7" viewBox="0 0 6 7"><path d="M0.5 0.5L5 3.5 0.5 6.5z" fill="#a5a5a5"/></svg>
<svg class="a" style="left:76.3px;top:280.33000000000004px;" width="10" height="8" viewBox="0 0 10 8"><path d="M0 0.5H3.8L4.8 1.8H10V8H0Z" fill="#a3aeb7"/></svg>
<div class="t" style="left:88.00px;top:280.54px;font-size:9.2px;color:#161616;font-weight:normal;font-style:normal;font-family:'Liberation Sans',sans-serif;">mipmap-hdpi</div>
<svg class="a" style="left:63.099999999999994px;top:293.945px;" width="6" height="7" viewBox="0 0 6 7"><path d="M0.5 0.5L5 3.5 0.5 6.5z" fill="#a5a5a5"/></svg>
<svg class="a" style="left:76.3px;top:292.945px;" width="10" height="8" viewBox="0 0 10 8"><path d="M0 0.5H3.8L4.8 1.8H10V8H0Z" fill="#a3aeb7"/></svg>
<div class="t" style="left:88.00px;top:293.16px;font-size:9.2px;color:#161616;font-weight:normal;font-style:normal;font-family:'Liberation Sans',sans-serif;">mipmap-mdpi</div>
<svg class="a" style="left:63.099999999999994px;top:306.56px;" width="6" height="7" viewBox="0 0 6 7"><path d="M0.5 0.5L5 3.5 0.5 6.5z" fill="#a5a5a5"/></svg>
<svg class="a" style="left:76.3px;top:305.56px;" width="10" height="8" viewBox="0 0 10 8"><path d="M0 0.5H3.8L4.8 1.8H10V8H0Z" fill="#a3aeb7"/></svg>
<div class="t" style="left:88.00px;top:305.77px;font-size:9.2px;color:#161616;font-weight:normal;font-style:normal;font-family:'Liberation Sans',sans-serif;">mipmap-xhdpi</div>
<svg class="a" style="left:63.099999999999994px;top:319.175px;" width="6" height="7" viewBox="0 0 6 7"><path d="M0.5 0.5L5 3.5 0.5 6.5z" fill="#a5a5a5"/></svg>
<svg class="a" style="left:76.3px;top:318.175px;" width="10" height="8" viewBox="0 0 10 8"><path d="M0 0.5H3.8L4.8 1.8H10V8H0Z" fill="#a3aeb7"/></svg>
<div class="t" style="left:88.00px;top:318.39px;font-size:9.2px;color:#161616;font-weight:normal;font-style:normal;font-family:'Liberation Sans',sans-serif;">mipmap-xxhdpi</div>
<svg class="a" style="left:63.099999999999994px;top:331.79px;" width="6" height="7" viewBox="0 0 6 7"><path d="M0.5 0.5L5 3.5 0.5 6.5z" fill="#a5a5a5"/></svg>
<svg class="a" style="left:76.3px;top:330.79px;" width="10" height="8" viewBox="0 0 10 8"><path d="M0 0.5H3.8L4.8 1.8H10V8H0Z" fill="#a3aeb7"/></svg>
<div class="t" style="left:88.00px;top:331.00px;font-size:9.2px;color:#161616;font-weight:normal;font-style:normal;font-family:'Liberation Sans',sans-serif;">mipmap-xxxhdpi</div>
<svg class="a" style="left:62.599999999999994px;top:344.90500000000003px;" width="7" height="6" viewBox="0 0 7 6"><path d="M0.5 0.5H6.5L3.5 5z" fill="#a5a5a5"/></svg>
<svg class="a" style="left:76.3px;top:343.40500000000003px;" width="10" height="8" viewBox="0 0 10 8"><path d="M0 0.5H3.8L4.8 1.8H10V8H0Z" fill="#a3aeb7"/></svg>
<div class="t" style="left:88.00px;top:343.62px;font-size:9.2px;color:#161616;font-weight:normal;font-style:normal;font-family:'Liberation Sans',sans-serif;">values</div>
<svg class="a" style="left:88.7px;top:355.02000000000004px;" width="11" height="11" viewBox="0 0 11 11"><path d="M3.5 0.5H8L9.5 2V6H3.5Z" fill="#eef0f2" stroke="#9aa5ad" stroke-width="0.7"/><rect x="0" y="6" width="10" height="4.5" fill="#e3643c"/><path d="M2.8 7L1.5 8.3 2.8 9.5M7.2 7L8.5 8.3 7.2 9.5" fill="none" stroke="#fff" stroke-width="0.8"/></svg>
<div class="t" style="left:101.40px;top:356.23px;font-size:9.2px;color:#161616;font-weight:normal;font-style:normal;font-family:'Liberation Sans',sans-serif;">colors.xml</div>
<svg class="a" style="left:88.7px;top:367.635px;" width="11" height="11" viewBox="0 0 11 11"><path d="M3.5 0.5H8L9.5 2V6H3.5Z" fill="#eef0f2" stroke="#9aa5ad" stroke-width="0.7"/><rect x="0" y="6" width="10" height="4.5" fill="#e3643c"/><path d="M2.8 7L1.5 8.3 2.8 9.5M7.2 7L8.5 8.3 7.2 9.5" fill="none" stroke="#fff" stroke-width="0.8"/></svg>
<div class="t" style="left:101.40px;top:368.85px;font-size:9.2px;color:#161616;font-weight:normal;font-style:normal;font-family:'Liberation Sans',sans-serif;">strings.xml</div>
<svg class="a" style="left:88.7px;top:380.25px;" width="11" height="11" viewBox="0 0 11 11"><path d="M3.5 0.5H8L9.5 2V6H3.5Z" fill="#eef0f2" stroke="#9aa5ad" stroke-width="0.7"/><rect x="0" y="6" width="10" height="4.5" fill="#e3643c"/><path d="M2.8 7L1.5 8.3 2.8 9.5M7.2 7L8.5 8.3 7.2 9.5" fill="none" stroke="#fff" stroke-width="0.8"/></svg>
<div class="t" style="left:101.40px;top:381.46px;font-size:9.2px;color:#161616;font-weight:normal;font-style:normal;font-family:'Liberation Sans',sans-serif;">styles.xml</div>
</div>
<div class="a" style="left:220px;top:49.5px;width:84px;height:16px;background:#dcdcdc;"></div>
<div class="a" style="left:304px;top:49.5px;width:53px;height:16.5px;background:#fbfbfb;"></div>
<div class="a" style="left:357px;top:49.5px;width:72px;height:16px;background:#dcdcdc;"></div>
<div class="a" style="left:429px;top:49.5px;width:92px;height:16px;background:#dcdcdc;"></div>
<div class="a" style="left:303.5px;top:49.5px;width:0.8px;height:16px;background:#c8c8c8;"></div>
<div class="a" style="left:357px;top:49.5px;width:0.8px;height:16px;background:#c8c8c8;"></div>
<div class="a" style="left:428.5px;top:49.5px;width:0.8px;height:16px;background:#c8c8c8;"></div>
<div class="a" style="left:521px;top:49.5px;width:0.8px;height:16px;background:#c8c8c8;"></div>
<div class="a" style="left:220px;top:65.3px;width:84px;height:0.8px;background:#c8c8c8;"></div>
<div class="a" style="left:357px;top:65.3px;width:479px;height:0.8px;background:#c8c8c8;"></div>
<svg class="a" style="left:225px;top:52px;" width="12" height="12" viewBox="0 0 12 12"><circle cx="5" cy="5.2" r="4.6" fill="#9fd4ec"/><path d="M6.9 3.4A2.4 2.4 0 1 0 6.9 7" fill="none" stroke="#2f4a5c" stroke-width="1.1"/><path d="M5.5 11.5L11 6V8.6L8.1 11.5z" fill="#f0792a"/><path d="M8.1 11.5L11 8.6V11.5z" fill="#22a4e6"/><path d="M5.5 6L8 8.5 5.5 11z" fill="#1f8ad8"/></svg>
<div class="t" style="left:237.00px;top:53.69px;font-size:8.05px;color:#333;font-weight:normal;font-style:normal;font-family:'Liberation Sans',sans-serif;">MainActivity.kt</div>
<svg class="a" style="left:309px;top:52px;" width="12" height="12" viewBox="0 0 12 12"><path d="M0.5 0.5H6L8.5 3V10.5H0.5Z" fill="#dfe3e7" stroke="#a0aab2" stroke-width="0.8"/><path d="M1.8 3H5M1.8 5H6.8M1.8 7H4.5" stroke="#a0aab2" stroke-width="0.7"/><path d="M5.5 11.5L11 6V8.6L8.1 11.5z" fill="#f0792a"/><path d="M8.1 11.5L11 8.6V11.5z" fill="#22a4e6"/><path d="M5.5 6L8 8.5 5.5 11z" fill="#1f8ad8"/></svg>
<div class="t" style="left:322.00px;top:53.69px;font-size:8.05px;color:#222;font-weight:normal;font-style:normal;font-family:'Liberation Sans',sans-serif;">Util.kt</div>
<svg class="a" style="left:364px;top:52px;" width="11" height="11" viewBox="0 0 11 11"><path d="M3.5 0.5H8L9.5 2V6H3.5Z" fill="#eef0f2" stroke="#9aa5ad" stroke-width="0.7"/><rect x="0" y="6" width="10" height="4.5" fill="#e3643c"/><path d="M2.8 7L1.5 8.3 2.8 9.5M7.2 7L8.5 8.3 7.2 9.5" fill="none" stroke="#fff" stroke-width="0.8"/></svg>
<div class="t" style="left:375.80px;top:53.69px;font-size:8.05px;color:#333;font-weight:normal;font-style:normal;font-family:'Liberation Sans',sans-serif;">strings.xml</div>
<svg class="a" style="left:435px;top:52px;" width="11" height="11" viewBox="0 0 11 11"><path d="M3.5 0.5H8L9.5 2V6H3.5Z" fill="#eef0f2" stroke="#9aa5ad" stroke-width="0.7"/><rect x="0" y="6" width="10" height="4.5" fill="#e3643c"/><path d="M2.8 7L1.5 8.3 2.8 9.5M7.2 7L8.5 8.3 7.2 9.5" fill="none" stroke="#fff" stroke-width="0.8"/></svg>
<div class="t" style="left:446.60px;top:53.69px;font-size:8.05px;color:#333;font-weight:normal;font-style:normal;font-family:'Liberation Sans',sans-serif;">activity_main.xml</div>
<svg class="a" style="left:292.5px;top:54.5px;" width="6" height="6" viewBox="0 0 6 6"><path d="M0.5 0.5L5.5 5.5M5.5 0.5L0.5 5.5" stroke="#b0b0b0" stroke-width="0.9"/></svg>
<svg class="a" style="left:346.4px;top:54.5px;" width="6" height="6" viewBox="0 0 6 6"><path d="M0.5 0.5L5.5 5.5M5.5 0.5L0.5 5.5" stroke="#b0b0b0" stroke-width="0.9"/></svg>
<svg class="a" style="left:418px;top:54.5px;" width="6" height="6" viewBox="0 0 6 6"><path d="M0.5 0.5L5.5 5.5M5.5 0.5L0.5 5.5" stroke="#b0b0b0" stroke-width="0.9"/></svg>
<svg class="a" style="left:511px;top:54.5px;" width="6" height="6" viewBox="0 0 6 6"><path d="M0.5 0.5L5.5 5.5M5.5 0.5L0.5 5.5" stroke="#b0b0b0" stroke-width="0.9"/></svg>
<div class="a" style="left:264px;top:258.71999999999997px;width:572px;height:14.6px;background:#fcfae6;"></div>
<div class="a" style="left:258.3px;top:66px;width:4.7px;height:369px;background:#f2f2f4;"></div>
<div class="a" style="left:220px;top:258.71999999999997px;width:36.6px;height:14.6px;background:#f8f5df;"></div>
<div class="a" style="left:256.6px;top:126.66px;width:1.3px;height:146.66px;background:#c3c7cc;"></div>
<div class="t" style="left:229.70px;top:71.24px;font-size:12px;color:#9a9a9a;font-weight:normal;font-style:normal;font-family:'Liberation Mono',monospace;transform:scaleX(0.9167);transform-origin:0 0;">1</div>
<div class="t" style="left:229.70px;top:85.78px;font-size:12px;color:#9a9a9a;font-weight:normal;font-style:normal;font-family:'Liberation Mono',monospace;transform:scaleX(0.9167);transform-origin:0 0;">2</div>
<div class="t" style="left:229.70px;top:100.32px;font-size:12px;color:#9a9a9a;font-weight:normal;font-style:normal;font-family:'Liberation Mono',monospace;transform:scaleX(0.9167);transform-origin:0 0;">3</div>
<div class="t" style="left:229.70px;top:114.86px;font-size:12px;color:#9a9a9a;font-weight:normal;font-style:normal;font-family:'Liberation Mono',monospace;transform:scaleX(0.9167);transform-origin:0 0;">4</div>
<div class="t" style="left:229.70px;top:129.40px;font-size:12px;color:#9a9a9a;font-weight:normal;font-style:normal;font-family:'Liberation Mono',monospace;transform:scaleX(0.9167);transform-origin:0 0;">5</div>
<div class="t" style="left:229.70px;top:143.94px;font-size:12px;color:#9a9a9a;font-weight:normal;font-style:normal;font-family:'Liberation Mono',monospace;transform:scaleX(0.9167);transform-origin:0 0;">6</div>
<div class="t" style="left:229.70px;top:158.48px;font-size:12px;color:#9a9a9a;font-weight:normal;font-style:normal;font-family:'Liberation Mono',monospace;transform:scaleX(0.9167);transform-origin:0 0;">7</div>
<div class="t" style="left:229.70px;top:173.02px;font-size:12px;color:#9a9a9a;font-weight:normal;font-style:normal;font-family:'Liberation Mono',monospace;transform:scaleX(0.9167);transform-origin:0 0;">8</div>
<div class="t" style="left:229.70px;top:187.56px;font-size:12px;color:#9a9a9a;font-weight:normal;font-style:normal;font-family:'Liberation Mono',monospace;transform:scaleX(0.9167);transform-origin:0 0;">9</div>
<div class="t" style="left:223.10px;top:202.10px;font-size:12px;color:#9a9a9a;font-weight:normal;font-style:normal;font-family:'Liberation Mono',monospace;transform:scaleX(0.9167);transform-origin:0 0;">10</div>
<div class="t" style="left:223.10px;top:216.64px;font-size:12px;color:#9a9a9a;font-weight:normal;font-style:normal;font-family:'Liberation Mono',monospace;transform:scaleX(0.9167);transform-origin:0 0;">11</div>
<div class="t" style="left:223.10px;top:231.18px;font-size:12px;color:#9a9a9a;font-weight:normal;font-style:normal;font-family:'Liberation Mono',monospace;transform:scaleX(0.9167);transform-origin:0 0;">12</div>
<div class="t" style="left:223.10px;top:245.72px;font-size:12px;color:#9a9a9a;font-weight:normal;font-style:normal;font-family:'Liberation Mono',monospace;transform:scaleX(0.9167);transform-origin:0 0;">13</div>
<div class="t" style="left:223.10px;top:260.26px;font-size:12px;color:#9a9a9a;font-weight:normal;font-style:normal;font-family:'Liberation Mono',monospace;transform:scaleX(0.9167);transform-origin:0 0;">14</div>
<svg class="a" style="left:260px;top:131.16px;" width="7" height="8" viewBox="0 0 7 8"><path d="M0.5 0.5H6.5V4.5L3.5 7.3 0.5 4.5z" fill="#ffffff" stroke="#c6c6c6" stroke-width="0.6"/><path d="M1.8 3H5.2" stroke="#c6c6c6" stroke-width="0.6"/></svg>
<svg class="a" style="left:260px;top:189.32px;" width="7" height="8" viewBox="0 0 7 8"><path d="M0.5 0.5H6.5V4.5L3.5 7.3 0.5 4.5z" fill="#ffffff" stroke="#c6c6c6" stroke-width="0.6"/><path d="M1.8 3H5.2" stroke="#c6c6c6" stroke-width="0.6"/></svg>
<svg class="a" style="left:260px;top:232.94px;" width="7" height="8" viewBox="0 0 7 8"><path d="M0.5 7.5H6.5V3.5L3.5 0.7 0.5 3.5z" fill="#ffffff" stroke="#c6c6c6" stroke-width="0.6"/><path d="M1.8 5H5.2" stroke="#c6c6c6" stroke-width="0.6"/></svg>
<svg class="a" style="left:260px;top:262.02px;" width="7" height="8" viewBox="0 0 7 8"><path d="M0.5 7.5H6.5V3.5L3.5 0.7 0.5 3.5z" fill="#ffffff" stroke="#c6c6c6" stroke-width="0.6"/><path d="M1.8 5H5.2" stroke="#c6c6c6" stroke-width="0.6"/></svg>
<div class="a" style="left:296.9px;top:200.85999999999999px;width:0.8px;height:65.16px;background:#ececec;"></div>
<div class="t" style="left:268.50px;top:71.34px;font-size:12px;color:#000080;font-weight:bold;font-style:normal;font-family:'Liberation Mono',monospace;transform:scaleX(0.9167);transform-origin:0 0;">package</div>
<div class="t" style="left:314.70px;top:71.34px;font-size:12px;color:#000000;font-weight:normal;font-style:normal;font-family:'Liberation Mono',monospace;transform:scaleX(0.9167);transform-origin:0 0;"> com.annapurna.envato.myfirstkotlinapplication</div>
<div class="t" style="left:268.50px;top:100.42px;font-size:12px;color:#000080;font-weight:bold;font-style:normal;font-family:'Liberation Mono',monospace;transform:scaleX(0.9167);transform-origin:0 0;">import</div>
<div class="t" style="left:308.10px;top:100.42px;font-size:12px;color:#000000;font-weight:normal;font-style:normal;font-family:'Liberation Mono',monospace;transform:scaleX(0.9167);transform-origin:0 0;"> android.widget.EditText</div>
<div class="t" style="left:268.50px;top:129.50px;font-size:12px;color:#000080;font-weight:bold;font-style:normal;font-family:'Liberation Mono',monospace;transform:scaleX(0.9167);transform-origin:0 0;">fun</div>
<div class="t" style="left:288.30px;top:129.50px;font-size:12px;color:#000000;font-weight:normal;font-style:normal;font-family:'Liberation Mono',monospace;transform:scaleX(0.9167);transform-origin:0 0;"> isEmpty(editText: EditText) : Boolean </div>
<div class="a" style="left:545.4000000000001px;top:128.35999999999999px;width:7.199999999999999px;height:13.5px;background:#a6d2f2;"></div>
<div class="t" style="left:545.70px;top:129.50px;font-size:12px;color:#000000;font-weight:normal;font-style:normal;font-family:'Liberation Mono',monospace;transform:scaleX(0.9167);transform-origin:0 0;">{</div>
<div class="t" style="left:268.50px;top:158.58px;font-size:12px;color:#000000;font-weight:normal;font-style:normal;font-family:'Liberation Mono',monospace;transform:scaleX(0.9167);transform-origin:0 0;">    </div>
<div class="t" style="left:294.90px;top:158.58px;font-size:12px;color:#000080;font-weight:bold;font-style:normal;font-family:'Liberation Mono',monospace;transform:scaleX(0.9167);transform-origin:0 0;">val</div>
<div class="t" style="left:314.70px;top:158.58px;font-size:12px;color:#000000;font-weight:normal;font-style:normal;font-family:'Liberation Mono',monospace;transform:scaleX(0.9167);transform-origin:0 0;"> text = editText.</div>
<div class="t" style="left:426.90px;top:158.58px;font-size:12px;color:#660e7a;font-weight:normal;font-style:italic;font-family:'Liberation Mono',monospace;transform:scaleX(0.9167);transform-origin:0 0;text-decoration:underline;text-decoration-thickness:0.8px;text-underline-offset:1.5px;">text</div>
<div class="t" style="left:268.50px;top:187.66px;font-size:12px;color:#000000;font-weight:normal;font-style:normal;font-family:'Liberation Mono',monospace;transform:scaleX(0.9167);transform-origin:0 0;">    </div>
<div class="t" style="left:294.90px;top:187.66px;font-size:12px;color:#000080;font-weight:bold;font-style:normal;font-family:'Liberation Mono',monospace;transform:scaleX(0.9167);transform-origin:0 0;">return if</div>
<div class="t" style="left:354.30px;top:187.66px;font-size:12px;color:#000000;font-weight:normal;font-style:normal;font-family:'Liberation Mono',monospace;transform:scaleX(0.9167);transform-origin:0 0;"> (text.</div>
<div class="t" style="left:400.50px;top:187.66px;font-size:12px;color:#000000;font-weight:normal;font-style:italic;font-family:'Liberation Mono',monospace;transform:scaleX(0.9167);transform-origin:0 0;">isEmpty</div>
<div class="t" style="left:446.70px;top:187.66px;font-size:12px;color:#000000;font-weight:normal;font-style:normal;font-family:'Liberation Mono',monospace;transform:scaleX(0.9167);transform-origin:0 0;">()) {</div>
<div class="t" style="left:268.50px;top:202.20px;font-size:12px;color:#000000;font-weight:normal;font-style:normal;font-family:'Liberation Mono',monospace;transform:scaleX(0.9167);transform-origin:0 0;">        editText.</div>
<div class="t" style="left:380.70px;top:202.20px;font-size:12px;color:#660e7a;font-weight:normal;font-style:italic;font-family:'Liberation Mono',monospace;transform:scaleX(0.9167);transform-origin:0 0;text-decoration:underline;text-decoration-thickness:0.8px;text-underline-offset:1.5px;">error</div>
<div class="t" style="left:413.70px;top:202.20px;font-size:12px;color:#000000;font-weight:normal;font-style:normal;font-family:'Liberation Mono',monospace;transform:scaleX(0.9167);transform-origin:0 0;"> = </div>
<div class="t" style="left:433.50px;top:202.20px;font-size:12px;color:#008000;font-weight:bold;font-style:normal;font-family:'Liberation Mono',monospace;transform:scaleX(0.9167);transform-origin:0 0;">&quot;Field Required&quot;</div>
<div class="t" style="left:268.50px;top:216.74px;font-size:12px;color:#000000;font-weight:normal;font-style:normal;font-family:'Liberation Mono',monospace;transform:scaleX(0.9167);transform-origin:0 0;">        </div>
<div class="t" style="left:321.30px;top:216.74px;font-size:12px;color:#000080;font-weight:bold;font-style:normal;font-family:'Liberation Mono',monospace;transform:scaleX(0.9167);transform-origin:0 0;">true</div>
<div class="t" style="left:268.50px;top:231.28px;font-size:12px;color:#000000;font-weight:normal;font-style:normal;font-family:'Liberation Mono',monospace;transform:scaleX(0.9167);transform-origin:0 0;">    } </div>
<div class="t" style="left:308.10px;top:231.28px;font-size:12px;color:#000080;font-weight:bold;font-style:normal;font-family:'Liberation Mono',monospace;transform:scaleX(0.9167);transform-origin:0 0;">else</div>
<div class="t" style="left:268.50px;top:245.82px;font-size:12px;color:#000000;font-weight:normal;font-style:normal;font-family:'Liberation Mono',monospace;transform:scaleX(0.9167);transform-origin:0 0;">        </div>
<div class="t" style="left:321.30px;top:245.82px;font-size:12px;color:#000080;font-weight:bold;font-style:normal;font-family:'Liberation Mono',monospace;transform:scaleX(0.9167);transform-origin:0 0;">false</div>
<div class="a" style="left:268.2px;top:259.21999999999997px;width:7.199999999999999px;height:13.5px;background:#a6d2f2;"></div>
<div class="t" style="left:268.50px;top:260.36px;font-size:12px;color:#000000;font-weight:normal;font-style:normal;font-family:'Liberation Mono',monospace;transform:scaleX(0.9167);transform-origin:0 0;">}</div>
<svg class="a" style="left:829px;top:68px;" width="7" height="6" viewBox="0 0 7 6"><path d="M0.5 3L2.5 5 6.5 0.5" fill="none" stroke="#59a84b" stroke-width="1.3"/></svg>
<svg class="a" style="left:838px;top:56px;" width="10" height="10" viewBox="0 0 10 10"><circle cx="5" cy="5" r="4" fill="none" stroke="#3aa55a" stroke-width="1.4"/><circle cx="5" cy="5" r="1.6" fill="#2d7a43"/></svg>
<div class="t" style="left:842.5px;top:79.2px;font-size:7.6px;color:#1a1a1a;font-weight:normal;transform:translate(-50%,-50%) rotate(90deg);transform-origin:center;line-height:1">Gradle</div>
<svg class="a" style="left:839px;top:361px;" width="8" height="9" viewBox="0 0 8 9"><rect x="0.5" y="0.5" width="7" height="8" rx="0.8" fill="none" stroke="#555" stroke-width="0.9"/><path d="M2.5 7H5.5" stroke="#555" stroke-width="0.8"/></svg>
<div class="t" style="left:842.3px;top:406.5px;font-size:7.7px;color:#1a1a1a;font-weight:normal;transform:translate(-50%,-50%) rotate(90deg);transform-origin:center;line-height:1">Device File Explorer</div>
<div class="a" style="left:780px;top:434.5px;width:56px;height:0.8px;background:#d8d8d8;"></div>
<div class="a" style="left:789px;top:61.2px;width:41px;height:341.5px;background:#ececec;border:1px solid #5a5a5a"></div>
<svg class="a" style="left:798px;top:68px;" width="6" height="6" viewBox="0 0 6 6"><path d="M0.5 0.5L5.5 5.5M5.5 0.5L0.5 5.5" stroke="#5e6a74" stroke-width="0.9"/></svg>
<div class="a" style="left:815px;top:71px;width:6px;height:0.9px;background:#5e6a74;"></div>
<svg class="a" style="left:802.5px;top:87.4px;" width="14" height="12" viewBox="0 0 14 12"><path d="M3.6 3.4A4.6 4.6 0 1 0 10.4 3.4" fill="none" stroke="#5e6a74" stroke-width="1.7"/><path d="M7 0.5V6.6" stroke="#5e6a74" stroke-width="1.7"/></svg>
<svg class="a" style="left:803.0px;top:116.7px;" width="13" height="12" viewBox="0 0 13 12"><path d="M0.5 3.8H3.2L7 0.5V11.5L3.2 8.2H0.5z" fill="#5e6a74"/><path d="M8.6 3A3.4 3.4 0 0 1 8.6 9" fill="none" stroke="#5e6a74" stroke-width="1.6"/><path d="M8.6 4.8A1.3 1.3 0 0 1 8.6 7.2" fill="none" stroke="#5e6a74" stroke-width="1.1"/></svg>
<svg class="a" style="left:803.5px;top:145.0px;" width="12" height="12" viewBox="0 0 12 12"><path d="M1.5 3.8H4.2L8 0.5V11.5L4.2 8.2H1.5z" fill="#5e6a74"/><path d="M9.3 4.3A2.2 2.2 0 0 1 9.3 7.7" fill="none" stroke="#5e6a74" stroke-width="1.4"/></svg>
<svg class="a" style="left:801.5px;top:173.0px;" width="16" height="16" viewBox="0 0 16 16"><rect x="4.6" y="2.2" width="6.8" height="11.6" rx="0.9" transform="rotate(-45 8 8)" fill="none" stroke="#5e6a74" stroke-width="1.7"/><path d="M10.2 0.8A6.5 6.5 0 0 1 15.2 6" fill="none" stroke="#5e6a74" stroke-width="1.1"/></svg>
<svg class="a" style="left:801.5px;top:201.6px;" width="16" height="16" viewBox="0 0 16 16"><rect x="4.6" y="2.2" width="6.8" height="11.6" rx="0.9" transform="rotate(45 8 8)" fill="none" stroke="#5e6a74" stroke-width="1.7"/><path d="M5.8 0.8A6.5 6.5 0 0 0 0.8 6" fill="none" stroke="#5e6a74" stroke-width="1.1"/></svg>
<svg class="a" style="left:802.5px;top:232.5px;" width="14" height="13" viewBox="0 0 14 13"><path d="M0.5 2.6H3.6L4.8 0.8H9.2L10.4 2.6H13.5V12.5H0.5z" fill="#5e6a74"/><circle cx="7" cy="7.4" r="2.6" fill="#ececec"/><circle cx="7" cy="7.4" r="1.3" fill="#5e6a74"/></svg>
<svg class="a" style="left:803.5px;top:262.3px;" width="12" height="12" viewBox="0 0 12 12"><circle cx="5" cy="5" r="4" fill="none" stroke="#5e6a74" stroke-width="1.4"/><path d="M7.9 7.9L11.3 11.3" stroke="#5e6a74" stroke-width="1.8"/><path d="M2.8 5H7.2M5 2.8V7.2" stroke="#5e6a74" stroke-width="1.1"/></svg>
<svg class="a" style="left:804.5px;top:293.5px;" width="10" height="10" viewBox="0 0 10 10"><path d="M9 0.8V9.6L0.9 5.2z" fill="none" stroke="#5e6a74" stroke-width="1.3" stroke-linejoin="round"/></svg>
<svg class="a" style="left:804.5px;top:322.2px;" width="10" height="10" viewBox="0 0 10 10"><circle cx="5" cy="5" r="4.3" fill="none" stroke="#5e6a74" stroke-width="1.3"/></svg>
<svg class="a" style="left:804.5px;top:351.0px;" width="10" height="10" viewBox="0 0 10 10"><rect x="0.8" y="0.8" width="8.4" height="8.4" rx="0.5" fill="none" stroke="#5e6a74" stroke-width="1.3"/></svg>
<svg class="a" style="left:804.25px;top:383.5px;" width="10.5" height="3" viewBox="0 0 10.5 3"><circle cx="1.4" cy="1.5" r="1.3" fill="#5e6a74"/><circle cx="5.2" cy="1.5" r="1.3" fill="#5e6a74"/><circle cx="9" cy="1.5" r="1.3" fill="#5e6a74"/></svg>
<div class="a" style="left:572px;top:62.5px;width:209px;height:396px;border-radius:23px 23px 28px 28px/23px 23px 27px 27px;background:#252525"></div>
<div class="a" style="left:575.5px;top:66px;width:202px;height:389px;border-radius:20px 20px 25px 25px/20px 20px 24px 24px;background:#000;border:1px solid #4d4d4d"></div>
<div class="a" style="left:646.5px;top:70px;width:61.5px;height:7px;border-radius:3.5px;background:#0e0e0e;border:1px solid #3a3a3a"></div>
<div class="a" style="left:732.3px;top:71.4px;width:4px;height:4px;border-radius:50%;background:#1e2230"></div>
<div class="a" style="left:646.5px;top:443px;width:61.5px;height:6.2px;border-radius:3px;background:#0e0e0e;border:1px solid #3a3a3a"></div>
<div class="a" style="left:581px;top:92.7px;width:192px;height:317px;background:#fafafa;"></div>
<div class="a" style="left:581px;top:92.7px;width:192px;height:11.5px;background:#3434a4;"></div>
<div class="a" style="left:581px;top:103.5px;width:192px;height:25.1px;background:#4444b6;"></div>
<div class="a" style="left:581px;top:128.6px;width:192px;height:2px;background:linear-gradient(#c9c9d6,#fafafa)"></div>
<svg class="a" style="left:588.5px;top:94.3px;" width="7" height="7" viewBox="0 0 7 7"><path d="M3.5 0L4.3 1.2 5.8 0.8 5.9 2.3 7 3.5 5.9 4.7 5.8 6.2 4.3 5.8 3.5 7 2.7 5.8 1.2 6.2 1.1 4.7 0 3.5 1.1 2.3 1.2 0.8 2.7 1.2z" fill="#fff"/><circle cx="3.5" cy="3.5" r="1.1" fill="#3434a4"/></svg>
<div class="a" style="left:599.5px;top:94.5px;width:6.5px;height:6.5px;border-radius:50%;background:#8e97d3"></div>
<svg class="a" style="left:611px;top:94px;" width="6" height="8" viewBox="0 0 6 8"><path d="M1.5 0H5.5V7.5H0.5V1.5z" fill="#fff"/></svg>
<svg class="a" style="left:724px;top:94px;" width="8" height="7" viewBox="0 0 8 7"><path d="M0 1.5Q4 -1.5 8 1.5L4 6.5z" fill="#fff"/></svg>
<svg class="a" style="left:732.5px;top:94.5px;" width="6" height="6.5" viewBox="0 0 6 6.5"><path d="M0 6.5L6 0V6.5z" fill="#c8cbe8"/><path d="M2.5 6.5L6 3V6.5z" fill="#fff"/></svg>
<svg class="a" style="left:742.5px;top:94px;" width="5" height="8" viewBox="0 0 5 8"><rect x="0.5" y="1" width="4" height="6.8" fill="#fff"/><rect x="1.5" y="0" width="2" height="1" fill="#fff"/><rect x="1.2" y="2" width="2.6" height="2.5" fill="#3434a4"/></svg>
<div class="t" style="left:750.50px;top:94.34px;font-size:7.4px;color:#ffffff;font-weight:normal;font-style:normal;font-family:'Liberation Sans',sans-serif;">5:26</div>
<div class="t" style="left:587.80px;top:111.94px;font-size:9.4px;color:#ffffff;font-weight:normal;font-style:normal;font-family:'Liberation Sans',sans-serif;transform:scaleX(1.02);transform-origin:0 0;-webkit-text-stroke:0.5px #fff;">MyFirstKotlinApplication</div>
<div class="a" style="left:651.4px;top:159px;width:48.6px;height:17.4px;background:#d6d6d6;border-radius:1px;box-shadow:0 0.6px 0.8px rgba(0,0,0,0.25)"></div>
<div class="t" style="left:655.50px;top:165.54px;font-size:6.8px;color:#2e2e2e;font-weight:normal;font-style:normal;font-family:'Liberation Sans',sans-serif;transform:scaleX(0.886);transform-origin:0 0;">SHOW TOAST</div>
<div class="a" style="left:599.9px;top:227.6px;width:153px;height:17px;background:#d6d6d6;border-radius:1px;box-shadow:0 0.6px 0.8px rgba(0,0,0,0.25)"></div>
<div class="t" style="left:653.20px;top:233.34px;font-size:6.8px;color:#2e2e2e;font-weight:normal;font-style:normal;font-family:'Liberation Sans',sans-serif;transform:scaleX(0.872);transform-origin:0 0;">PASS MESSAGE</div>
<div class="a" style="left:599.9px;top:304px;width:153px;height:17px;background:#d6d6d6;border-radius:1px;box-shadow:0 0.6px 0.8px rgba(0,0,0,0.25)"></div>
<div class="t" style="left:650.25px;top:309.74px;font-size:6.8px;color:#2e2e2e;font-weight:normal;font-style:normal;font-family:'Liberation Sans',sans-serif;transform:scaleX(0.888);transform-origin:0 0;">SHARE MESSAGE</div>
<div class="t" style="left:614.00px;top:198.06px;font-size:8.2px;color:#a8a8a8;font-weight:normal;font-style:normal;font-family:'Liberation Sans',sans-serif;">Enter your message</div>
<div class="a" style="left:614px;top:206.8px;width:124px;height:1.4px;background:#e0608f;"></div>
<div class="a" style="left:728.8px;top:195.7px;width:9px;height:9px;border-radius:50%;background:#e0134f"></div>
<div class="a" style="left:732.7px;top:197.3px;width:1.2px;height:3.8px;background:#fff;"></div>
<div class="a" style="left:732.7px;top:202px;width:1.2px;height:1.1px;background:#fff;"></div>
<svg class="a" style="left:729.5px;top:207.5px;" width="8" height="4" viewBox="0 0 8 4"><path d="M0 4L4 0 8 4z" fill="#e91e63"/></svg>
<div class="a" style="left:688.8px;top:211px;width:54.5px;height:16px;background:#1a1a1a;"></div>
<div class="t" style="left:695.00px;top:216.84px;font-size:6.8px;color:#d8d8d8;font-weight:normal;font-style:normal;font-family:'Liberation Sans',sans-serif;transform:scaleX(0.927);transform-origin:0 0;">Field Required</div>
<svg class="a" style="left:618.5px;top:417.5px;" width="7" height="8" viewBox="0 0 7 8"><path d="M6.5 0.5V7.5L0.5 4z" fill="#bdbdbd"/></svg>
<div class="a" style="left:671.3px;top:416.5px;width:9.2px;height:9.2px;border-radius:50%;background:radial-gradient(circle at 50% 45%,#c8c8c8 0,#b0b0b0 55%,#808080 100%)"></div>
<div class="a" style="left:725px;top:417.8px;width:6.5px;height:6.5px;background:#bdbdbd;"></div>
<svg class="a" style="left:704px;top:219px;" width="9" height="13" viewBox="0 0 9 13"><path d="M0.5 0.5V10.5L3 8.3 4.8 12.3 6.5 11.5 4.8 7.6H8z" fill="#111" stroke="#fff" stroke-width="0.8"/></svg>
<svg class="a" style="left:21.5px;top:453px;" width="8" height="8" viewBox="0 0 8 8"><rect x="0.5" y="0.5" width="7" height="7" fill="none" stroke="#666" stroke-width="0.9"/><path d="M2 2.5L3.5 4 2 5.5" fill="none" stroke="#666" stroke-width="0.8"/></svg>
<div class="t" style="left:32.40px;top:453.77px;font-size:7.6px;color:#2a2a2a;font-weight:normal;font-style:normal;font-family:'Liberation Sans',sans-serif;">Terminal</div>
<svg class="a" style="left:76.5px;top:452px;" width="9" height="10" viewBox="0 0 9 10"><path d="M2.5 0V7M0.5 5L2.5 8 4.5 5" fill="none" stroke="#2fa84a" stroke-width="1.2"/><path d="M6.5 10V3M4.5 5L6.5 2 8.5 5" fill="none" stroke="#2fa84a" stroke-width="1.2"/></svg>
<div class="t" style="left:86.50px;top:453.77px;font-size:7.6px;color:#2a2a2a;font-weight:normal;font-style:normal;font-family:'Liberation Sans',sans-serif;">Build</div>
<svg class="a" style="left:118px;top:453.5px;" width="7" height="7" viewBox="0 0 7 7"><path d="M0 0.6H7M0 3.5H4.5M0 6.4H6" stroke="#444" stroke-width="1.1"/></svg>
<div class="t" style="left:128.50px;top:453.77px;font-size:7.6px;color:#2a2a2a;font-weight:normal;font-style:normal;font-family:'Liberation Sans',sans-serif;">6: Logcat</div>
<svg class="a" style="left:175px;top:453.5px;" width="10" height="7" viewBox="0 0 10 7"><path d="M1 6.5A4 4 0 0 1 9 6.5" fill="none" stroke="#555" stroke-width="1.1"/><path d="M5 6.5L7 3.5" stroke="#555" stroke-width="1"/></svg>
<div class="t" style="left:187.30px;top:453.77px;font-size:7.6px;color:#2a2a2a;font-weight:normal;font-style:normal;font-family:'Liberation Sans',sans-serif;">Android Profiler</div>
<svg class="a" style="left:254.5px;top:452px;" width="9" height="10" viewBox="0 0 9 10"><path d="M0.5 0.5L7.5 5 0.5 9.5z" fill="#27b43a"/><circle cx="6.5" cy="8" r="1.8" fill="#1d7f2c"/></svg>
<div class="t" style="left:265.00px;top:453.77px;font-size:7.6px;color:#2a2a2a;font-weight:normal;font-style:normal;font-family:'Liberation Sans',sans-serif;">4: Run</div>
<svg class="a" style="left:299px;top:452.5px;" width="9" height="9" viewBox="0 0 9 9"><rect x="0.5" y="0.5" width="6" height="7" fill="#e8e0b0" stroke="#8a8a6a" stroke-width="0.7"/><circle cx="6" cy="6" r="2.5" fill="#e0a030"/></svg>
<div class="t" style="left:310.00px;top:453.77px;font-size:7.6px;color:#2a2a2a;font-weight:normal;font-style:normal;font-family:'Liberation Sans',sans-serif;">TODO</div>
<svg class="a" style="left:782px;top:452px;" width="11" height="10" viewBox="0 0 11 10"><path d="M5.5 0.8A4.5 4 0 1 1 2.5 7.8L0.5 9.3 1.2 6.6A4.5 4 0 0 1 5.5 0.8z" fill="none" stroke="#777" stroke-width="0.9"/></svg>
<div class="t" style="left:796.00px;top:453.77px;font-size:7.6px;color:#333;font-weight:normal;font-style:normal;font-family:'Liberation Sans',sans-serif;">Event Log</div>
<div class="a" style="left:4px;top:467px;width:8.5px;height:8px;background:#cfcfcf;"></div>
<div class="a" style="left:4px;top:467px;width:8.5px;height:8px;border:0.8px solid #777"></div>
<div class="t" style="left:21.00px;top:467.84px;font-size:7.75px;color:#333;font-weight:normal;font-style:normal;font-family:'Liberation Sans',sans-serif;">Gradle build finished in 8s 610ms (moments ago)</div>
<div class="t" style="left:656.00px;top:467.80px;font-size:7.8px;color:#333;font-weight:normal;font-style:normal;font-family:'Liberation Sans',sans-serif;">14:2</div>
<div class="t" style="left:678.00px;top:467.80px;font-size:7.8px;color:#333;font-weight:normal;font-style:normal;font-family:'Liberation Sans',sans-serif;">LF</div>
<svg class="a" style="left:687px;top:468.5px;" width="3" height="6" viewBox="0 0 3 6"><path d="M0 2.3L1.5 0.5 3 2.3zM0 3.7L1.5 5.5 3 3.7z" fill="#555"/></svg>
<div class="t" style="left:697.00px;top:467.80px;font-size:7.8px;color:#333;font-weight:normal;font-style:normal;font-family:'Liberation Sans',sans-serif;">UTF-8</div>
<svg class="a" style="left:718.5px;top:468.5px;" width="3" height="6" viewBox="0 0 3 6"><path d="M0 2.3L1.5 0.5 3 2.3zM0 3.7L1.5 5.5 3 3.7z" fill="#555"/></svg>
<div class="t" style="left:729.00px;top:467.97px;font-size:7.6px;color:#9a9a9a;font-weight:normal;font-style:normal;font-family:'Liberation Sans',sans-serif;">Context: &lt;no context&gt;</div>
<svg class="a" style="left:821px;top:467.5px;" width="7" height="8" viewBox="0 0 7 8"><rect x="0.5" y="3.5" width="6" height="4" fill="none" stroke="#555" stroke-width="0.9"/><path d="M1.5 3.5V2A1.8 1.8 0 0 1 5 2" fill="none" stroke="#555" stroke-width="0.9"/></svg>
<svg class="a" style="left:836.5px;top:467px;" width="9" height="10" viewBox="0 0 9 10"><rect x="1" y="0.5" width="7" height="6" rx="2" fill="none" stroke="#666" stroke-width="0.9"/><path d="M2.5 3H6.5M1 7.5L0.5 9.5M8 7.5L8.5 9.5M3 7V9.5M6 7V9.5" stroke="#666" stroke-width="0.8"/></svg>
</body></html>
